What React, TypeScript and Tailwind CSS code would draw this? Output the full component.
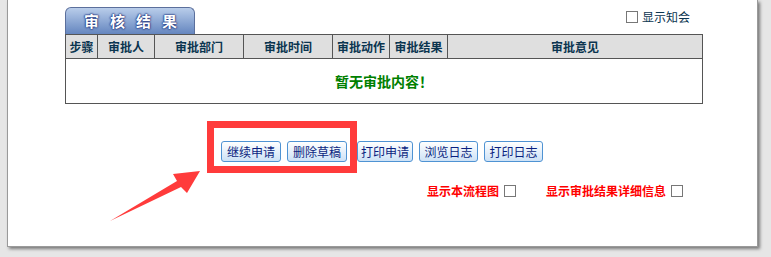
import React from "react";

const font = { fontFamily: '"SimSun", "Noto Sans CJK SC", sans-serif' };

const columns = [
  { label: "步骤", width: 32 },
  { label: "审批人", width: 57 },
  { label: "审批部门", width: 89 },
  { label: "审批时间", width: 89 },
  { label: "审批动作", width: 57 },
  { label: "审批结果", width: 58 },
  { label: "审批意见", width: 255 },
];

const actions = [
  { label: "继续申请", w: "w-[60px]" },
  { label: "删除草稿", w: "w-[60px]" },
  { label: "打印申请", w: "w-[56px]" },
  { label: "浏览日志", w: "w-[59px]" },
  { label: "打印日志", w: "w-[59px]" },
];

function Box() {
  return <span className="inline-block h-[12px] w-[12px] border border-[#777] bg-white" />;
}

function ActionButton({ label, w }: { label: string; w: string }) {
  return (
    <button
      type="button"
      className={`${w} h-[21px] rounded-[3px] border border-[#4f93d3] bg-gradient-to-b from-white to-[#cde2f6] text-[12px] leading-[19px] text-[#0a1f80]`}
    >
      {label}
    </button>
  );
}

export default function App() {
  return (
    <div className="relative h-[257px] w-[771px] overflow-hidden bg-[#e6e6e6] pl-[7px]" style={font}>
      <div className="h-[247px] w-[751px] border-b border-l border-r border-[#9a9a9a] bg-white shadow-[2px_2px_3px_#7a7a7a]">
        <div className="ml-[57px] w-[637px]">
          <div className="flex h-[34px] items-end justify-between">
            <div className="flex h-[27px] w-[130px] items-center justify-center rounded-t-[6px] border border-b-0 border-[#5b6f9c] bg-gradient-to-b from-[#b9cdea] to-[#6586bf]">
              <span className="pl-[12px] text-[15px] font-bold tracking-[11px] text-white [text-shadow:0_0_2px_#1c2f7a,0_0_2px_#1c2f7a,0_0_1px_#1c2f7a]">
                审核结果
              </span>
            </div>
            <label className="mb-[11px] mr-[12px] flex items-center gap-[4px] text-[12px] leading-none text-[#0b3550]">
              <Box />
              显示知会
            </label>
          </div>
          <table className="w-[637px] table-fixed border-collapse border border-[#555]">
            <colgroup>
              {columns.map((c) => (
                <col key={c.label} style={{ width: c.width }} />
              ))}
            </colgroup>
            <thead>
              <tr className="h-[24px] bg-[#dfdfdf]">
                {columns.map((c) => (
                  <th
                    key={c.label}
                    className="border border-[#555] p-0 text-center text-[12px] font-bold text-[#0b3550]"
                  >
                    {c.label}
                  </th>
                ))}
              </tr>
            </thead>
            <tbody>
              <tr className="h-[45px]">
                <td colSpan={7} className="text-center text-[14px] font-bold text-[#008000]">
                  暂无审批内容！
                </td>
              </tr>
            </tbody>
          </table>
          <div className="ml-[156px] mt-[34px] flex gap-[6px]">
            {actions.map((a, i) => (
              <div key={a.label} className={i === 2 ? "ml-[4px]" : ""}>
                <ActionButton label={a.label} w={a.w} />
              </div>
            ))}
          </div>
          <div className="mt-[23px] flex justify-end gap-[30px] pr-[19px] text-[12px] font-bold leading-none text-[#ff0000]">
            <span className="flex items-center gap-[5px]">
              显示本流程图
              <Box />
            </span>
            <span className="flex items-center gap-[5px]">
              显示审批结果详细信息
              <Box />
            </span>
          </div>
        </div>
      </div>

      <div className="pointer-events-none absolute left-[207px] top-[121px] h-[52px] w-[150px] border-[7px] border-[#ff3b3b]" />
      <svg className="pointer-events-none absolute left-0 top-0" width="771" height="257">
        <polygon points="110,221 177,181 173,174 200,171 187,193 181,187" fill="#ff3b3b" />
      </svg>
    </div>
  );
}
